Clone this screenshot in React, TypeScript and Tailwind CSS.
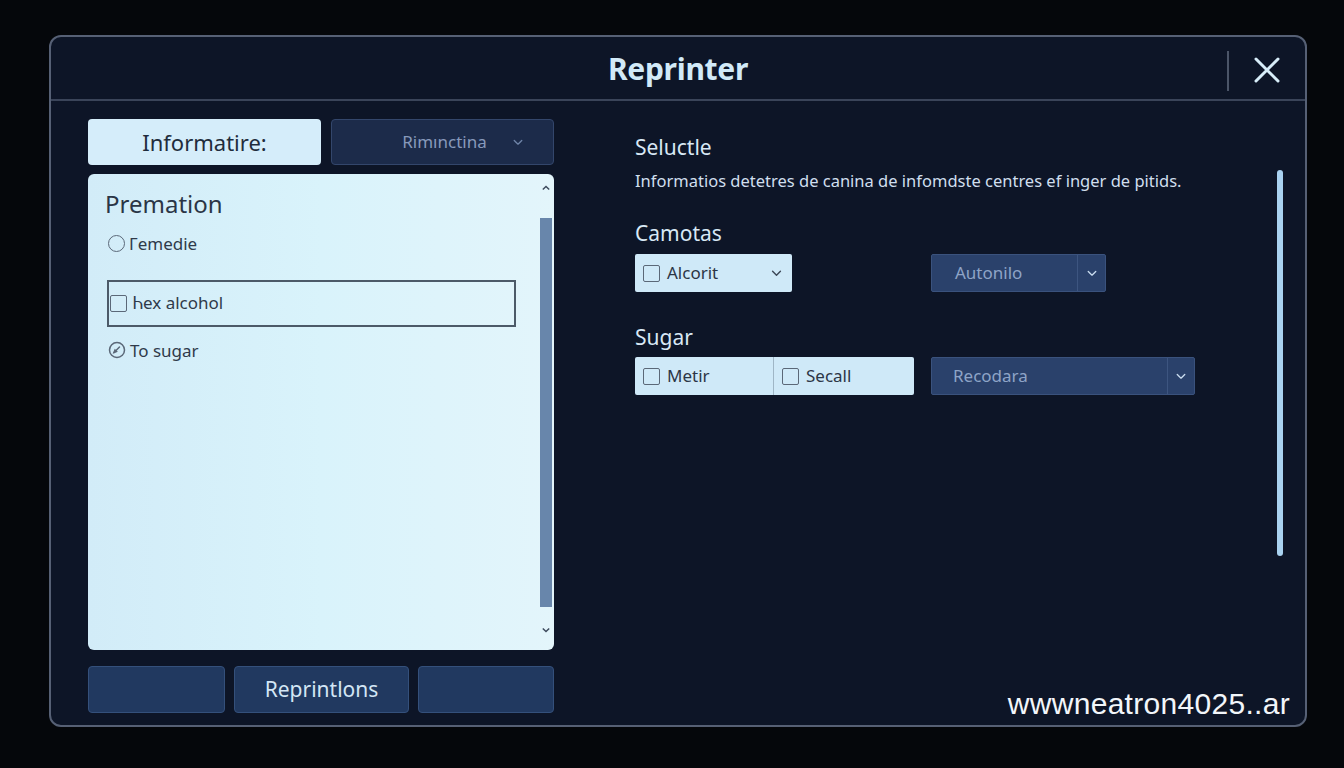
import React from "react";

const font = { fontFamily: '"Noto Sans", "Open Sans", sans-serif' };

function Chevron({ className = "" }: { className?: string }) {
  return (
    <svg viewBox="0 0 12 8" className={className} fill="none" stroke="currentColor" strokeWidth="1.6" strokeLinecap="round" strokeLinejoin="round">
      <path d="M1.5 1.5 L6 6 L10.5 1.5" />
    </svg>
  );
}

function Box({ dark = false }: { dark?: boolean }) {
  return (
    <span
      className={
        "inline-block w-[17px] h-[17px] rounded-[2px] border-[1.5px] " +
        (dark ? "border-[#4d5a6a]" : "border-[#5b6878]")
      }
    />
  );
}

export default function App() {
  return (
    <div className="w-[1344px] h-[768px] bg-[#05070b] pl-[49px] pt-[35px] overflow-hidden" style={font}>
      <div className="relative w-[1258px] h-[692px] rounded-[12px] border-2 border-[#566075] bg-[#0d1527] flex flex-col">
        {/* Header */}
        <div className="h-[64px] shrink-0 border-b-2 border-[#3a4459] flex items-center justify-center relative">
          <div className="text-[30px] font-bold text-[#d2eaf8] tracking-[-0.3px] leading-none mt-[2px]">Reprinter</div>
          <div className="absolute right-[76px] top-[14px] w-[2px] h-[40px] bg-[#4b5568]" />
          <svg className="absolute right-[24px] top-[19px] w-[28px] h-[28px]" viewBox="0 0 28 28" fill="none" stroke="#d7edf9" strokeWidth="3" strokeLinecap="round">
            <path d="M3 3 L25 25 M25 3 L3 25" />
          </svg>
        </div>

        {/* Body */}
        <div className="flex flex-1 pl-[37px] pt-[18px] pb-[12px]">
          {/* Left column */}
          <div className="w-[466px] flex flex-col">
            <div className="flex gap-[10px] h-[46px]">
              <div className="w-[233px] rounded-[4px] bg-[#d5edfa] flex items-center justify-center text-[22px] text-[#1f2c3c]">
                Informatire:
              </div>
              <div className="flex-1 rounded-[4px] bg-[#1c2b4a] border border-[#33466b] flex items-center justify-center gap-[26px] pl-[40px] text-[17px] text-[#8799bb]">
                <span>Rimınctina</span>
                <Chevron className="w-[10px] h-[7px] text-[#6f84a8]" />
              </div>
            </div>

            <div className="mt-[9px] h-[476px] rounded-[6px] bg-gradient-to-r from-[#d2ecf8] via-[#d9f3fb] to-[#e3f5fb] flex">
              <div className="flex-1 pl-[17px] pt-[14px] pr-[23px] flex flex-col">
                <div className="text-[24px] text-[#2a3546] leading-[32px]">Premation</div>
                <div className="mt-[11px] flex items-center gap-[4px] text-[17px] text-[#2f3a4a] pl-[3px]">
                  <span className="inline-block w-[17px] h-[17px] rounded-full border-[1.5px] border-[#5b6878]" />
                  <span>Гemedie</span>
                </div>
                <div className="mt-[23px] h-[47px] border-2 border-[#4c5a68] flex items-center gap-[6px] pl-[1px] text-[17px] text-[#2f3a4a] w-[409px] ml-[2px]">
                  <Box />
                  <span>Ꮒex alcohol</span>
                </div>
                <div className="mt-[11px] flex items-center gap-[4px] text-[17px] text-[#2f3a4a] pl-[3px]">
                  <svg viewBox="0 0 18 18" className="w-[18px] h-[18px]" fill="none" stroke="#5b6878" strokeWidth="1.5">
                    <circle cx="9" cy="9" r="7.5" />
                    <path d="M6 11.5 L11.5 6" strokeLinecap="round" />
                    <path d="M6 11.5 L8.5 10.5 L7 9 Z" fill="#5b6878" />
                  </svg>
                  <span>To sugar</span>
                </div>
              </div>
              {/* Scrollbar */}
              <div className="w-[16px] mr-[1px] flex flex-col items-center">
                <svg viewBox="0 0 10 6" className="w-[8px] h-[6px] mt-[11px]" fill="none" stroke="#3d4a5c" strokeWidth="1.8">
                  <path d="M1 5 L5 1 L9 5" />
                </svg>
                <div className="mt-[27px] w-[12px] h-[389px] bg-[#6886ab]" />
                <svg viewBox="0 0 10 6" className="w-[8px] h-[6px] mt-[20px]" fill="none" stroke="#3d4a5c" strokeWidth="1.8">
                  <path d="M1 1 L5 5 L9 1" />
                </svg>
              </div>
            </div>

            <div className="mt-[16px] flex gap-[9px] h-[47px]">
              <div className="w-[137px] rounded-[4px] bg-[#213960] border border-[#34507b]" />
              <div className="w-[175px] rounded-[4px] bg-[#213960] border border-[#34507b] flex items-center justify-center text-[21px] text-[#d3e6f5]">
                Reprintlons
              </div>
              <div className="flex-1 rounded-[4px] bg-[#213960] border border-[#34507b]" />
            </div>
          </div>

          {/* Right column */}
          <div className="flex-1 flex pl-[81px] pt-[14px]">
            <div className="flex-1 flex flex-col">
              <div className="text-[21px] text-[#d8e8f5] leading-[28px]">Seluctle</div>
              <div className="mt-[9px] text-[16.5px] text-[#d0dfee] leading-[22px]">
                Informatios detetres de canina de infomdste centres ef inger de pitids.
              </div>
              <div className="mt-[27px] text-[21px] text-[#d8e8f5] leading-[28px]">Camotas</div>
              <div className="mt-[7px] flex h-[38px]">
                <div className="w-[157px] rounded-[2px] bg-[#cfe9f8] flex items-center pl-[8px] pr-[10px] gap-[7px] text-[17px] text-[#2c3646]">
                  <Box />
                  <span className="flex-1">Alcorit</span>
                  <Chevron className="w-[11px] h-[7px] text-[#3b4656]" />
                </div>
                <div className="ml-[139px] w-[175px] rounded-[2px] bg-[#2a416b] border border-[#3a527d] flex items-center text-[17px] text-[#8ea4c7]">
                  <span className="flex-1 pl-[23px]">Autonilo</span>
                  <div className="w-[28px] h-full border-l border-[#3d5580] flex items-center justify-center">
                    <Chevron className="w-[10px] h-[7px] text-[#c9dcef]" />
                  </div>
                </div>
              </div>
              <div className="mt-[31px] text-[21px] text-[#d8e8f5] leading-[28px]">Sugar</div>
              <div className="mt-[6px] flex h-[38px]">
                <div className="w-[279px] rounded-[2px] bg-[#cfe9f8] flex text-[17px] text-[#2c3646]">
                  <div className="w-[139px] flex items-center gap-[7px] pl-[8px] border-r border-[#9fb6c6]">
                    <Box />
                    <span>Metir</span>
                  </div>
                  <div className="flex-1 flex items-center gap-[7px] pl-[8px]">
                    <Box />
                    <span>Secall</span>
                  </div>
                </div>
                <div className="ml-[17px] w-[264px] rounded-[2px] bg-[#2a416b] border border-[#3a527d] flex items-center text-[17px] text-[#8ea4c7]">
                  <span className="flex-1 pl-[21px]">Recodara</span>
                  <div className="w-[27px] h-full border-l border-[#3d5580] flex items-center justify-center">
                    <Chevron className="w-[10px] h-[7px] text-[#c9dcef]" />
                  </div>
                </div>
              </div>
            </div>
            {/* Right scrollbar */}
            <div className="w-[6px] mr-[22px] mt-[37px] h-[386px] rounded-full bg-[#a9d2f0]" />
          </div>
        </div>

        {/* Watermark */}
        <div
          className="absolute right-[15px] bottom-[4px] text-[30px] tracking-[0.3px] text-[#f2f6fa] leading-none pb-[2px]"
          style={{ fontFamily: '"Liberation Sans", Arial, sans-serif' }}
        >
          wwwneatron4025..ar
        </div>
      </div>
    </div>
  );
}
